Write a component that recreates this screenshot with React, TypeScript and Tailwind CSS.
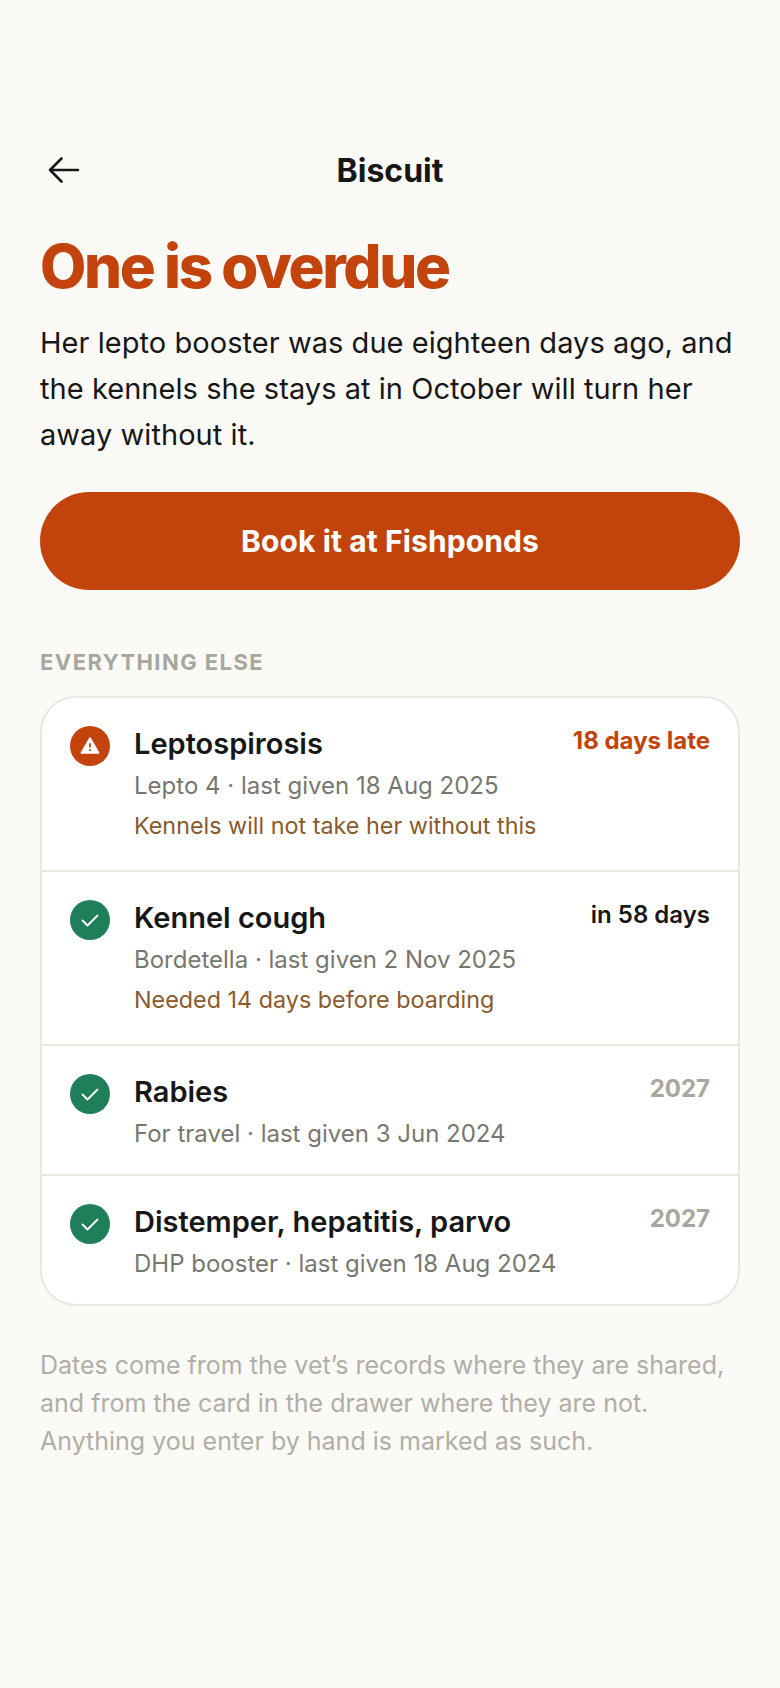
const font = { fontFamily: 'Inter, sans-serif' }

type Item = {
  name: string
  detail: string
  note?: string
  due: string
  dueClass: string
  late?: boolean
}

const items: Item[] = [
  {
    name: 'Leptospirosis',
    detail: 'Lepto 4 · last given 18 Aug 2025',
    note: 'Kennels will not take her without this',
    due: '18 days late',
    dueClass: 'font-bold text-[#c2440c]',
    late: true,
  },
  {
    name: 'Kennel cough',
    detail: 'Bordetella · last given 2 Nov 2025',
    note: 'Needed 14 days before boarding',
    due: 'in 58 days',
    dueClass: 'font-semibold text-[#171717]',
  },
  {
    name: 'Rabies',
    detail: 'For travel · last given 3 Jun 2024',
    due: '2027',
    dueClass: 'font-bold text-[#a8a69e]',
  },
  {
    name: 'Distemper, hepatitis, parvo',
    detail: 'DHP booster · last given 18 Aug 2024',
    due: '2027',
    dueClass: 'font-bold text-[#a8a69e]',
  },
]

function StatusIcon({ late }: { late?: boolean }) {
  if (late) {
    return (
      <div className="flex h-10 w-10 shrink-0 items-center justify-center rounded-full bg-[#c2440c]">
        <svg width="20" height="20" viewBox="0 0 20 20">
          <path d="M10 2 L18.6 17 H1.4 Z" fill="#fff" stroke="#fff" strokeWidth="1.6" strokeLinejoin="round" />
          <path d="M10 7.2 V11.6" stroke="#c2440c" strokeWidth="1.8" />
          <rect x="9.1" y="13.2" width="1.8" height="1.8" fill="#c2440c" />
        </svg>
      </div>
    )
  }
  return (
    <div className="flex h-10 w-10 shrink-0 items-center justify-center rounded-full bg-[#1f7f5a]">
      <svg width="20" height="20" viewBox="0 0 20 20" fill="none">
        <path d="M2.5 10.5 L7.5 15.5 L17.5 5.5" stroke="#fff" strokeWidth="1.8" strokeLinecap="round" strokeLinejoin="round" />
      </svg>
    </div>
  )
}

function Row({ item }: { item: Item }) {
  return (
    <div className="flex items-start gap-6 border-b-2 border-[#e8e7e0] px-7 pt-[28px] pb-[22px] last:border-b-0">
      <StatusIcon late={item.late} />
      <div className="min-w-0 flex-1">
        <div className="text-[29px] leading-[36px] font-semibold text-[#171717]">{item.name}</div>
        <div className="mt-[6px] text-[24px] leading-[36px] text-[#78776f]">{item.detail}</div>
        {item.note && <div className="mt-[4px] mb-[4px] text-[23.35px] leading-[36px] text-[#8a5a2b]">{item.note}</div>}
      </div>
      <div className={`text-[24px] leading-[30px] ${item.dueClass}`}>{item.due}</div>
    </div>
  )
}

export default function App() {
  return (
    <div className="min-h-[1688px] bg-[#fbfaf6] px-10 pt-[140px]" style={font}>
      <div className="relative flex h-[60px] items-center justify-center">
        <svg className="absolute left-[8px] top-[16px]" width="32" height="28" viewBox="0 0 32 28" fill="none">
          <path d="M30 14 H2 M13.5 2.5 L2 14 L13.5 25.5" stroke="#171717" strokeWidth="2.6" strokeLinecap="round" strokeLinejoin="round" />
        </svg>
        <div className="pt-[2px] text-[32px] font-bold text-[#171717]">Biscuit</div>
      </div>

      <h1 className="mt-[30px] text-[60px] leading-[72px] font-extrabold tracking-[-0.04em] text-[#c2440c]">One is overdue</h1>
      <p className="mt-[18px] text-[29px] leading-[46px] tracking-[0.05px] text-[#171717]">
        Her lepto booster was due eighteen days ago, and the kennels she stays at in October will turn her away without it.
      </p>

      <button className="mt-[34px] h-[98px] w-full rounded-full bg-[#c2440c] text-[30px] font-bold tracking-[0.1px] text-white">
        Book it at Fishponds
      </button>

      <div className="mt-[58px] text-[22px] leading-[28px] font-bold tracking-[0.065em] text-[#a8a69e]">EVERYTHING ELSE</div>

      <div className="mt-[20px] overflow-hidden rounded-[36px] border-2 border-[#e8e7e0] bg-white">
        {items.map((item) => (
          <Row key={item.name} item={item} />
        ))}
      </div>

      <p className="mt-[40px] text-[25px] leading-[38px] text-[#b0aea6]">
        Dates come from the vet’s records where they are shared, and from the card in the drawer where they are not. Anything you enter by hand is marked as such.
      </p>
    </div>
  )
}
